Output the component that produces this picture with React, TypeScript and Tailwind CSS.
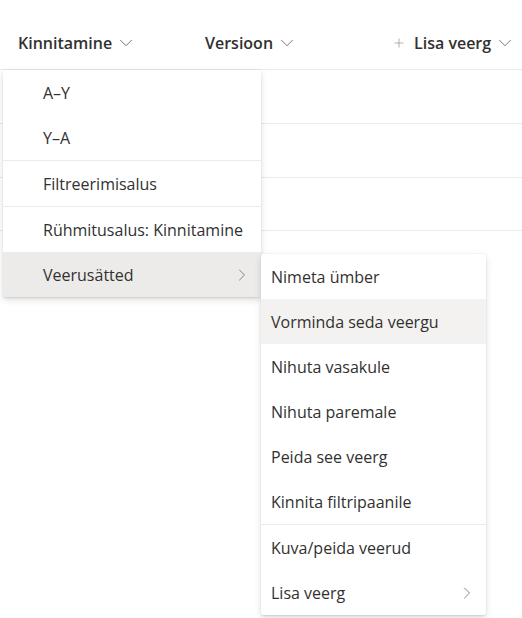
import { ChevronDown, ChevronRight, Plus } from "lucide-react";

type MenuItem = { label: string; sub?: boolean; active?: boolean; sep?: boolean };

const mainItems: MenuItem[] = [
  { label: "A–Y" },
  { label: "Y–A", sep: true },
  { label: "Filtreerimisalus", sep: true },
  { label: "Rühmitusalus: Kinnitamine" },
  { label: "Veerusätted", sub: true, active: true },
];

const subItems: MenuItem[] = [
  { label: "Nimeta ümber" },
  { label: "Vorminda seda veergu", active: true },
  { label: "Nihuta vasakule" },
  { label: "Nihuta paremale" },
  { label: "Peida see veerg" },
  { label: "Kinnita filtripaanile", sep: true },
  { label: "Kuva/peida veerud" },
  { label: "Lisa veerg", sub: true },
];

function HeaderCell({ label, plus, className }: { label: string; plus?: boolean; className: string }) {
  return (
    <div className={`flex items-center ${className}`}>
      {plus && <Plus size={14} strokeWidth={1.1} className="mr-[8px] text-[#8a8886]" />}
      <span className="text-[16px] font-semibold text-[#323130]">{label}</span>
      <ChevronDown size={22} strokeWidth={0.9} className="ml-[3px] text-[#605e5c]" />
    </div>
  );
}

function Menu({ items, className, pad, activeBg }: { items: MenuItem[]; className: string; pad: string; activeBg: string }) {
  return (
    <div
      className={`absolute bg-white rounded-[2px] shadow-[0_3px_7px_rgba(0,0,0,0.13),0_0.6px_2px_rgba(0,0,0,0.1)] ${className}`}
    >
      {items.map((it) => (
        <div key={it.label} className={it.sep ? "border-b border-[#edebe9]" : ""}>
          <div
            className={`flex items-center h-[45px] ${pad} pr-[9px] text-[16px] text-[#323130] ${
              it.active ? activeBg : ""
            }`}
          >
            <span className="flex-1">{it.label}</span>
            {it.sub && <ChevronRight size={20} strokeWidth={0.9} className="text-[#605e5c]" />}
          </div>
        </div>
      ))}
    </div>
  );
}

export default function App() {
  return (
    <div
      className="relative w-[522px] h-[618px] bg-white overflow-hidden"
      style={{ fontFamily: '"Segoe UI", "Open Sans", sans-serif' }}
    >
      <div className="flex h-[70px] pt-[16px] border-b border-[#edebe9]">
        <HeaderCell label="Kinnitamine" className="pl-[18px] w-[205px]" />
        <HeaderCell label="Versioon" className="w-[187px]" />
        <HeaderCell label="Lisa veerg" plus className="" />
      </div>
      <div className="h-[54px] border-b border-[#edebe9]" />
      <div className="h-[54px] border-b border-[#edebe9]" />
      <div className="h-[53px] border-b border-[#edebe9]" />

      {/* column menu */}
      <Menu items={mainItems} className="left-[3px] top-[70px] w-[258px]" pad="pl-[40px]" activeBg="bg-[#edebe9]" />

      {/* submenu */}
      <Menu items={subItems} className="left-[261px] top-[254px] w-[225px]" pad="pl-[10px]" activeBg="bg-[#f3f2f1]" />
    </div>
  );
}
